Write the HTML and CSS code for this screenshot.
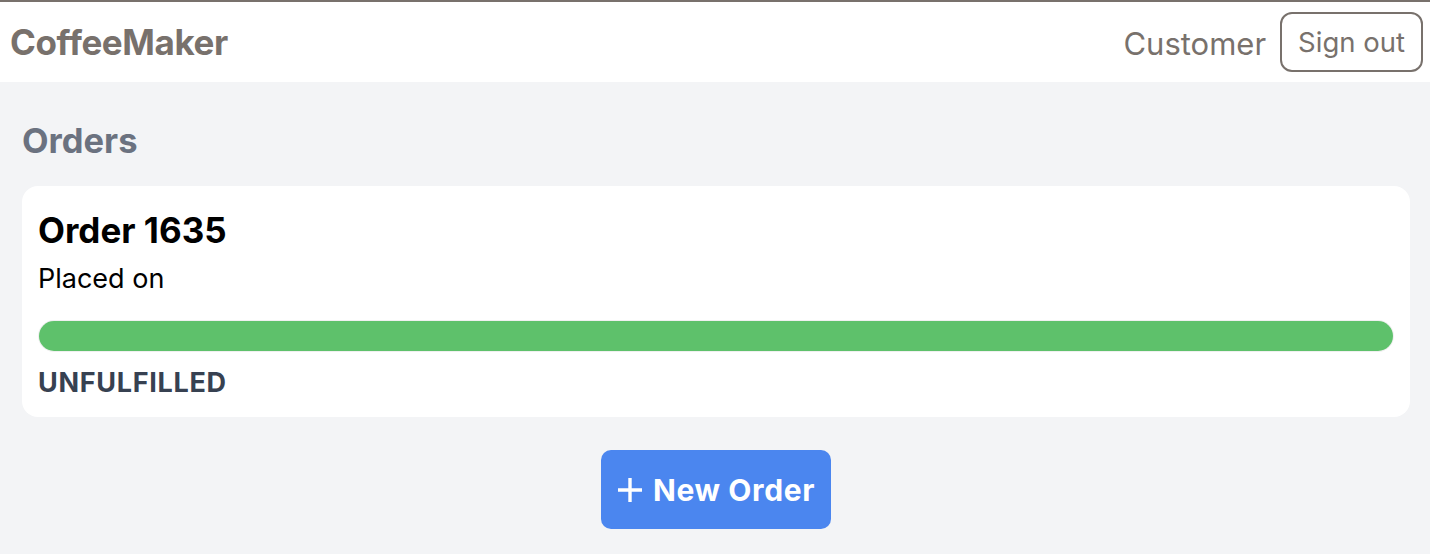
FILE: index.html
```html
<!DOCTYPE html>
<html lang="en">
<head>
<meta charset="utf-8">
<title>CoffeeMaker</title>
<link rel="stylesheet" href="styles.css">
</head>
<body>
<header class="topbar">
  <div class="brand">CoffeeMaker</div>
  <div class="user">
    <span class="role">Customer</span>
    <button class="signout">Sign out</button>
  </div>
</header>
<main class="content">
  <h1 class="section-title">Orders</h1>
  <section class="card">
    <h2 class="order-title">Order 1635</h2>
    <p class="placed">Placed on</p>
    <div class="progress"><div class="progress-fill" style="width:100%"></div></div>
    <div class="status">UNFULFILLED</div>
  </section>
  <div class="actions">
    <button class="new-order">
      <svg class="plus" width="26" height="26" viewBox="0 0 26 26" aria-hidden="true"><path d="M13 1v24M1 13h24" stroke="#fff" stroke-width="3.4" fill="none"/></svg>
      <span>New Order</span>
    </button>
  </div>
</main>
</body>
</html>
```
FILE: styles.css
```css
* { box-sizing: border-box; }
html, body { margin: 0; padding: 0; }
body {
  font-family: Inter, "Noto Sans", "Liberation Sans", sans-serif;
  background: #f3f4f6;
  border-top: 2px solid #78716c;
  min-height: 554px;
}
.topbar {
  height: 80px;
  background: #fff;
  display: flex;
  align-items: center;
  justify-content: space-between;
  padding: 0 7px 0 10px;
}
.brand {
  font-size: 35px;
  font-weight: 700;
  color: #78716c;
  letter-spacing: -0.4px;
}
.user {
  display: flex;
  align-items: center;
  gap: 14px;
}
.role {
  font-size: 31px;
  color: #78716c;
  padding-top: 2px;
}
.signout {
  font-family: inherit;
  font-size: 27.5px;
  color: #78716c;
  background: #fff;
  border: 2px solid #78716c;
  border-radius: 12px;
  height: 60px;
  padding: 0 16px;
}
.content {
  padding: 33px 20px 0 22px;
}
.section-title {
  margin: 0 0 19px;
  font-size: 34.5px;
  line-height: 52px;
  font-weight: 700;
  color: #6b7280;
}
.card {
  background: #fff;
  border-radius: 16px;
  padding: 18px 16px 16px;
}
.order-title {
  margin: 0;
  font-size: 35px;
  line-height: 52px;
  font-weight: 700;
  color: #000;
}
.placed {
  margin: 3px 0 0;
  font-size: 27px;
  line-height: 40px;
  color: #000;
}
.progress {
  margin-top: 21px;
  height: 32px;
  border-radius: 999px;
  background: #f0f0f0;
  padding: 1px;
  display: flex;
}
.progress-fill {
  background: #5ec16b;
  border-radius: 999px;
  height: 100%;
}
.status {
  margin-top: 13px;
  font-size: 27px;
  line-height: 36px;
  font-weight: 700;
  letter-spacing: 0.7px;
  color: #374151;
}
.actions {
  display: flex;
  justify-content: center;
  padding-top: 33px;
}
.new-order {
  font-family: inherit;
  display: flex;
  align-items: center;
  gap: 10px;
  height: 79px;
  padding: 0 16px;
  background: #4b86ef;
  color: #fff;
  border: none;
  border-radius: 10px;
  font-size: 30px;
  font-weight: 700;
  letter-spacing: 0.6px;
}
.plus { display: block; }
```
